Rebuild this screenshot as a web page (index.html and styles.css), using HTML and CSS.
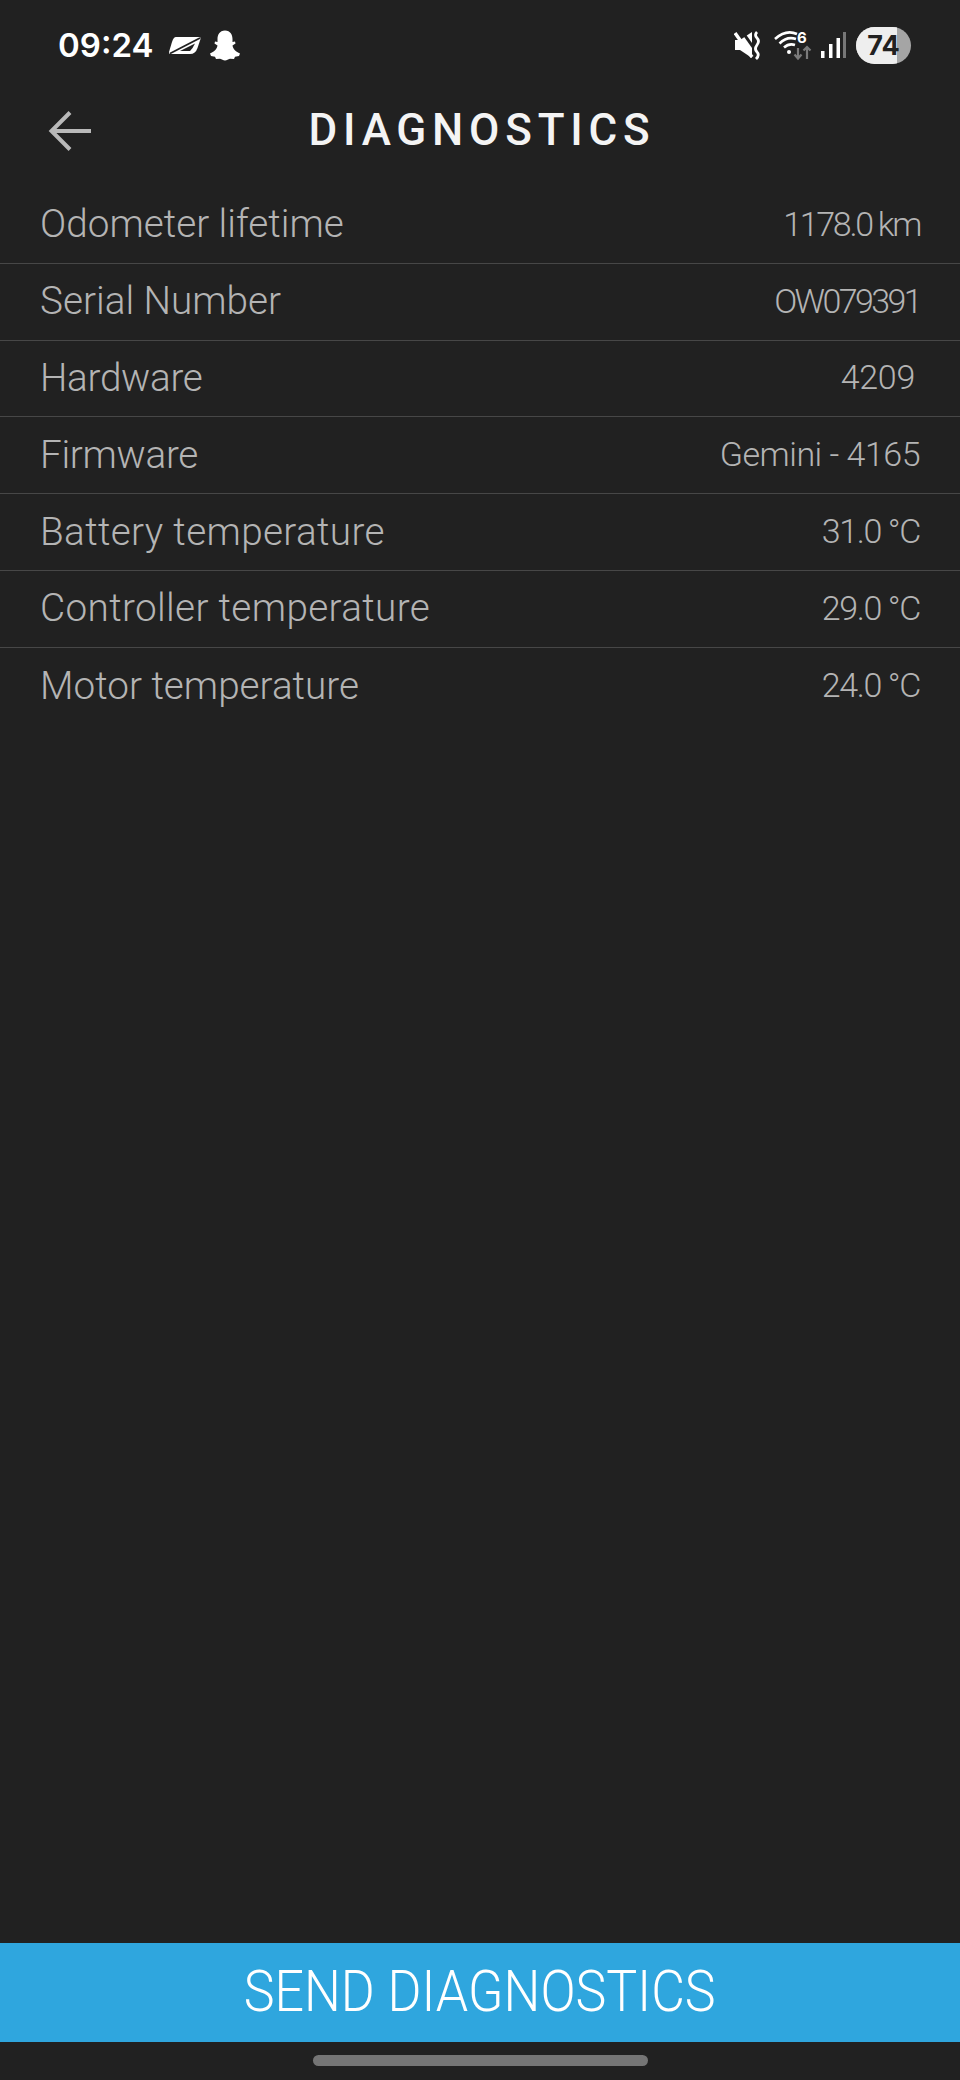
FILE: index.html
```html
<!DOCTYPE html>
<html lang="en">
<head>
    <meta charset="UTF-8">
    <meta name="viewport" content="width=device-width, initial-scale=1.0">
    <title>Diagnostics</title>
    <link rel="stylesheet" href="styles.css">
</head>
<body>
    <div class="page">
        <div class="statusbar">
            <div class="status-left">
                <span class="time">09:24</span>
                <svg class="ic-wheel" width="33" height="20" viewBox="0 0 33 20">
                    <path d="M8 2 H31 Q33 2 32.500 4 L29.500 13 Q27.500 19 22 19 H2.500 Q0.500 19 1 17 L4 7 Q5.500 2 8 2 Z" fill="#fff"/>
                    <path d="M2 18.500 L32 3" stroke="#212121" stroke-width="1.800" fill="none"/>
                    <path d="M12 16 L27 8.500 Q25 13 22 16 Z" fill="#212121"/>
                </svg>
                <svg class="ic-ghost" width="32" height="32" viewBox="0 0 32 32">
                    <path d="M16 1.500 C21.500 1.500 23.500 6 23.500 10 L23.500 13 L26 12.500 L26.500 14.500 L23.500 16.500 C24 20 27 23 31 24.500 L30 27 L26 27.800 L25 30 L21 29.700 C19 30 18 31.500 16 31.500 C14 31.500 13 30 11 29.700 L7 30 L6 27.800 L2 27 L1 24.500 C5 23 8 20 8.500 16.500 L5.500 14.500 L6 12.500 L8.500 13 L8.500 10 C8.500 6 10.500 1.500 16 1.500 Z" fill="#fff"/>
                </svg>
            </div>
            <div class="status-right">
                <svg class="ic-mute" width="28" height="30" viewBox="0 0 28 30">
                    <path d="M1 10 H6 L18 2 V28 L6 20 H1 Z" fill="#fff"/>
                    <path d="M7 0 L24 24" stroke="#212121" stroke-width="3"/>
                    <path d="M1 3 L18 27" stroke="#fff" stroke-width="3.500"/>
                    <path d="M23 2 Q20 5 23 8 Q26 11 23 15 Q20 19 23 22 Q26 25 22 29" stroke="#fff" stroke-width="2.800" fill="none"/>
                </svg>
                <svg class="ic-wifi" width="38" height="32" viewBox="0 0 38 32">
                    <path d="M1 10 Q12 0 23 5" stroke="#fff" stroke-width="2.600" fill="none"/>
                    <path d="M5.500 14.500 Q13 7 22 10" stroke="#fff" stroke-width="2.600" fill="none"/>
                    <path d="M10 18.500 Q15 14 21 16" stroke="#fff" stroke-width="2.600" fill="none"/>
                    <circle cx="15" cy="23" r="2" fill="#fff"/>
                    <text class="wifi-six" x="23" y="14">6</text>
                    <path d="M24 19 V29 M20.500 25.500 L24 29.500 L27.500 25.500" stroke="#7a7a7a" stroke-width="2.200" fill="none"/>
                    <path d="M33 30 V18 M29.500 21.500 L33 18 L36.500 21.500" stroke="#7a7a7a" stroke-width="2.200" fill="none"/>
                </svg>
                <svg class="ic-signal" width="26" height="28" viewBox="0 0 26 28">
                    <rect x="1" y="20" width="3.500" height="7" fill="#fff"/>
                    <rect x="9" y="13" width="3.500" height="14" fill="#fff"/>
                    <rect x="16.500" y="7" width="3.500" height="20" fill="#fff"/>
                    <rect x="23" y="1" width="3" height="26" fill="#777"/>
                </svg>
                <div class="battery"><span class="battery-fill"></span><span class="battery-num">74</span></div>
            </div>
        </div>

        <div class="header">
            <svg class="back" width="44" height="44" viewBox="0 0 44 44">
                <path d="M43 22 H4 M22 3.500 L3.500 22 L22 40.500" stroke="#b9b9b9" stroke-width="4" fill="none"/>
            </svg>
            <h1 class="title">DIAGNOSTICS</h1>
        </div>

        <div class="list">
            <div class="row"><span class="label">Odometer lifetime</span><span class="value km">1178.0 km</span></div>
            <div class="row"><span class="label">Serial Number</span><span class="value serial">OW079391</span></div>
            <div class="row"><span class="label narrow">Hardware</span><span class="value hw">4209</span></div>
            <div class="row"><span class="label narrow">Firmware</span><span class="value fw">Gemini - 4165</span></div>
            <div class="row"><span class="label wide">Battery temperature</span><span class="value temp">31.0 °C</span></div>
            <div class="row"><span class="label wide">Controller temperature</span><span class="value temp">29.0 °C</span></div>
            <div class="row"><span class="label">Motor temperature</span><span class="value temp">24.0 °C</span></div>
        </div>

        <div class="spacer"></div>

        <button class="send"><span class="send-text">SEND DIAGNOSTICS</span></button>
        <div class="nav"><span class="home-bar"></span></div>
    </div>
</body>
</html>
```

FILE: styles.css
```css
html, body {
    margin: 0;
    padding: 0;
}
body {
    background-color: #212121;
    font-family: Roboto, "Liberation Sans", sans-serif;
}
.page {
    display: flex;
    flex-direction: column;
    height: 2080px;
    overflow: hidden;
}
.statusbar {
    display: flex;
    justify-content: space-between;
    align-items: center;
    height: 90px;
    padding: 0 49px 0 58px;
    box-sizing: border-box;
}
.status-left, .status-right {
    display: flex;
    align-items: center;
}
.time {
    font-family: Inter, sans-serif;
    font-size: 33px;
    font-weight: 600;
    color: #fff;
    margin-right: 15px;
}
.ic-wheel {
    margin-right: 8px;
}
.ic-mute {
    margin-right: 12px;
}
.ic-wifi {
    margin-right: 8px;
}
.ic-signal {
    margin-right: 10px;
}
.wifi-six {
    font-family: Inter, sans-serif;
    font-size: 15px;
    font-weight: 700;
    fill: #fff;
}
.battery {
    position: relative;
    width: 55px;
    height: 37px;
    border-radius: 19px;
    background-color: #a5a5a5;
    overflow: hidden;
    display: flex;
    align-items: center;
    justify-content: center;
}
.battery-fill {
    position: absolute;
    left: 0;
    top: 0;
    bottom: 0;
    width: 41px;
    background-color: #eeeeee;
}
.battery-num {
    position: relative;
    font-family: Inter, sans-serif;
    font-size: 27px;
    font-weight: 700;
    color: #212121;
}
.header {
    position: relative;
    height: 97px;
    box-sizing: border-box;
    padding: 0 0 18px 4px;
    display: flex;
    align-items: center;
    justify-content: center;
}
.back {
    position: absolute;
    left: 48px;
    top: 19px;
}
.title {
    margin: 0;
    font-size: 44px;
    font-weight: 500;
    letter-spacing: 5.8px;
    color: #f4f4f4;
}
.list {
    display: flex;
    flex-direction: column;
}
.row {
    display: flex;
    justify-content: space-between;
    align-items: center;
    height: 76.800px;
    box-sizing: border-box;
    padding: 0 40px 2px;
    border-bottom: 1.500px solid #474747;
    font-weight: 300;
    color: #b4b4b4;
}
.row:last-child {
    border-bottom: none;
}
.label {
    font-size: 38.700px;
}
.narrow {
    letter-spacing: -0.300px;
}
.wide {
    letter-spacing: 0.350px;
}
.value {
    font-size: 34px;
}
.km {
    letter-spacing: -2.300px;
}
.serial {
    letter-spacing: -2.600px;
}
.hw {
    margin-right: 5px;
    letter-spacing: -0.300px;
}
.fw {
    letter-spacing: -0.500px;
}
.temp {
    letter-spacing: -1.400px;
}
.spacer {
    flex: 1;
}
.send {
    display: block;
    width: 100%;
    height: 99px;
    border: none;
    padding: 0 0 4px;
    background-color: #2fa6de;
    color: #fff;
    font-family: Roboto, sans-serif;
    font-size: 58px;
    font-weight: 300;
}
.send-text {
    display: inline-block;
    transform: scaleX(0.895);
}
.nav {
    height: 38px;
    display: flex;
    justify-content: center;
    padding-top: 13px;
    box-sizing: border-box;
}
.home-bar {
    width: 335px;
    height: 11px;
    border-radius: 6px;
    background-color: #757575;
}
```
